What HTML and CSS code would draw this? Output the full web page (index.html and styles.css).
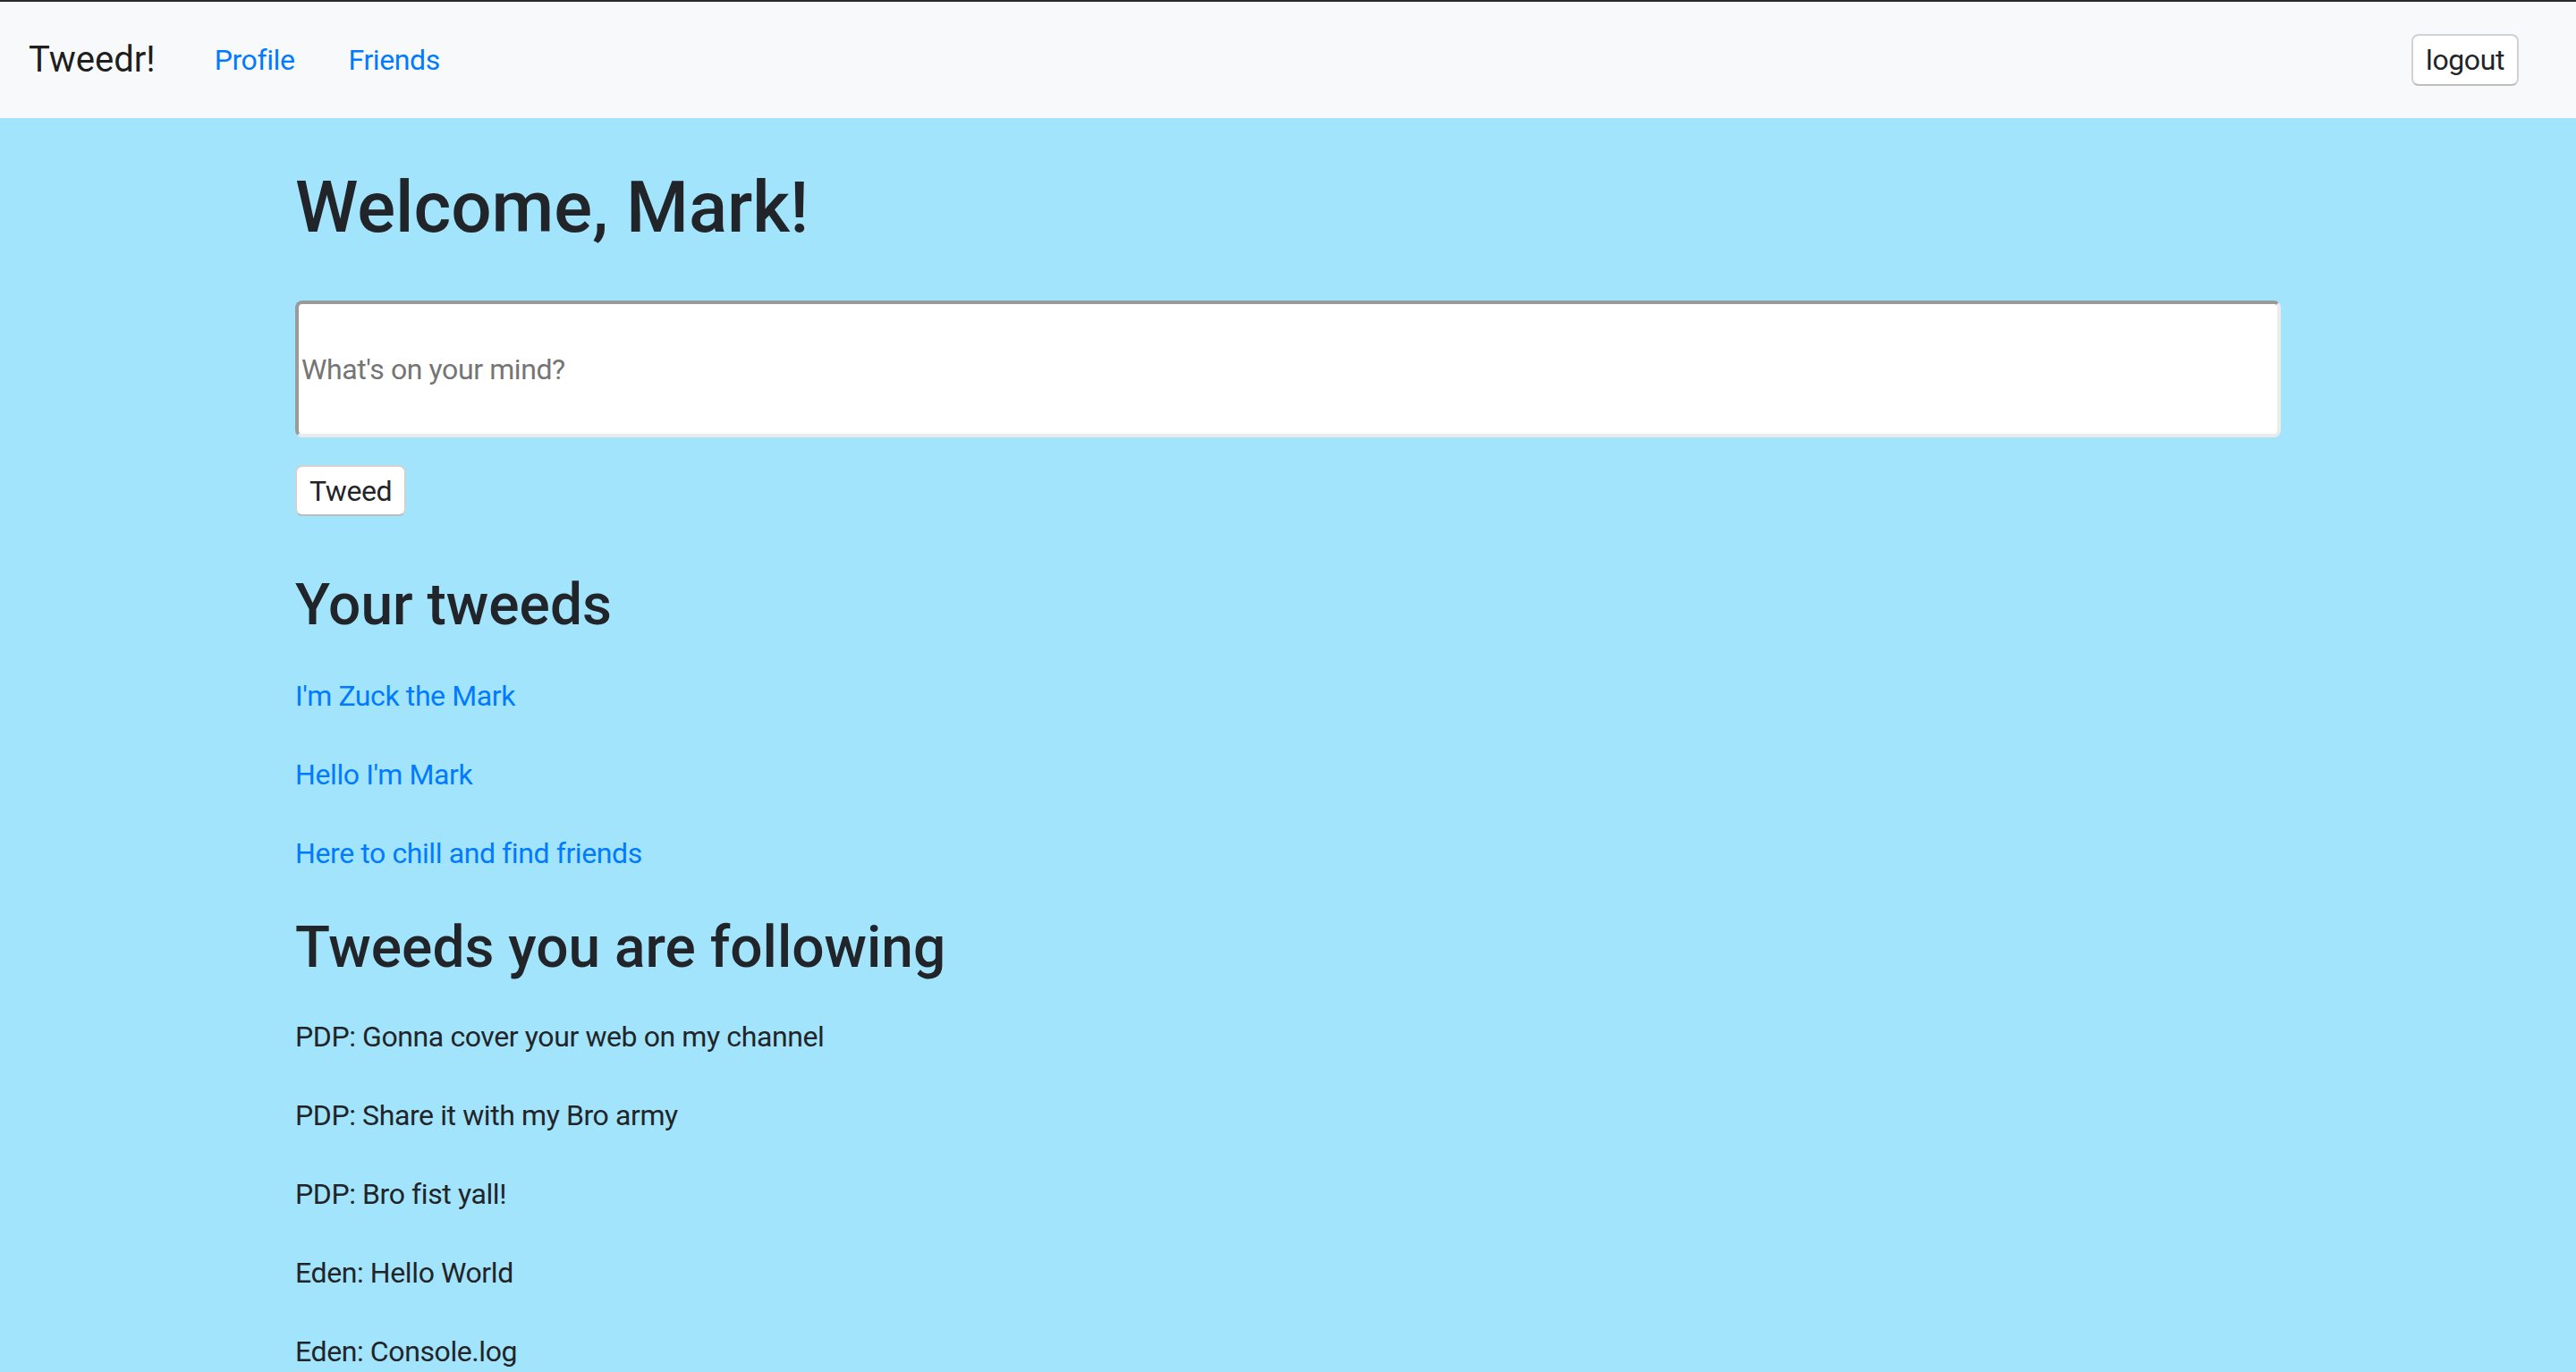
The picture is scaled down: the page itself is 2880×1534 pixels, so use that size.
FILE: index.html
```html
<!DOCTYPE html>
<html lang="en">
<head>
<meta charset="utf-8">
<title>Tweedr!</title>
<link rel="stylesheet" href="styles.css">
</head>
<body>
<nav class="navbar">
  <a class="brand" href="#">Tweedr!</a>
  <div class="nav-links">
    <a class="nav-link" href="#">Profile</a>
    <a class="nav-link" href="#">Friends</a>
  </div>
  <button class="btn logout" type="button">logout</button>
</nav>
<main class="container">
  <h1 class="title">Welcome, Mark!</h1>
  <form class="tweed-form">
    <input class="tweed-input" type="text" placeholder="What's on your mind?">
    <button class="btn tweed-btn" type="button">Tweed</button>
  </form>
  <h2 class="section-title">Your tweeds</h2>
  <p class="item"><a href="#">I'm Zuck the Mark</a></p>
  <p class="item"><a href="#">Hello I'm Mark</a></p>
  <p class="item"><a href="#">Here to chill and find friends</a></p>
  <h2 class="section-title following">Tweeds you are following</h2>
  <p class="item">PDP: Gonna cover your web on my channel</p>
  <p class="item">PDP: Share it with my Bro army</p>
  <p class="item">PDP: Bro fist yall!</p>
  <p class="item">Eden: Hello World</p>
  <p class="item">Eden: Console.log</p>
</main>
</body>
</html>
```
FILE: styles.css
```css
* { box-sizing: border-box; }

html, body {
  margin: 0;
  padding: 0;
}

body {
  background: #a3e4fd;
  color: #212529;
  font-family: Roboto, "Noto Sans", sans-serif;
  font-size: 32px;
  line-height: 1.5;
  letter-spacing: -0.4px;
}

a { color: #007bff; text-decoration: none; }

.navbar {
  display: flex;
  align-items: center;
  height: 132px;
  border-top: 2px solid #2b2b2b;
  background: #f8f9fa;
  padding: 0 64px 0 32px;
}

.brand {
  font-size: 40px;
  color: rgba(0, 0, 0, 0.9);
  margin-right: 66px;
  line-height: 1.5;
  letter-spacing: 0;
}

.nav-links {
  display: flex;
  gap: 60px;
}

.nav-link { color: #007bff; }

.btn {
  font-family: inherit;
  font-size: 32px;
  letter-spacing: -0.4px;
  color: #212529;
  background: #fff;
  border: 2px solid #d2d2d2;
  border-bottom-color: #bdbdbd;
  border-radius: 8px;
  line-height: 1;
  cursor: pointer;
}

.logout {
  margin-left: auto;
  height: 58px;
  padding: 0 14px;
}

.container {
  width: 2220px;
  margin: 0 auto;
}

.title {
  font-size: 80px;
  font-weight: 500;
  line-height: 1.2;
  letter-spacing: 0;
  margin: 52px 0 56px;
}

.tweed-form {
  display: flex;
  flex-direction: column;
  align-items: flex-start;
  gap: 31px;
}

.tweed-input {
  width: 100%;
  height: 153px;
  border: 4px solid #ebebeb;
  border-top-color: #9a9a9a;
  border-left-color: #9a9a9a;
  border-radius: 8px;
  background: #fff;
  font-family: inherit;
  font-size: 32px;
  letter-spacing: -0.4px;
  padding: 0 3px;
  color: #212529;
}

.tweed-input::placeholder { color: #757575; }

.tweed-btn {
  height: 57px;
  padding: 0 14px;
}

.section-title {
  font-size: 64px;
  font-weight: 500;
  line-height: 1.2;
  letter-spacing: 0;
  margin: 62px 0 38px;
}

.section-title.following {
  margin-top: 44px;
  margin-bottom: 36px;
}

.item {
  margin: 0 0 40px;
}
```
